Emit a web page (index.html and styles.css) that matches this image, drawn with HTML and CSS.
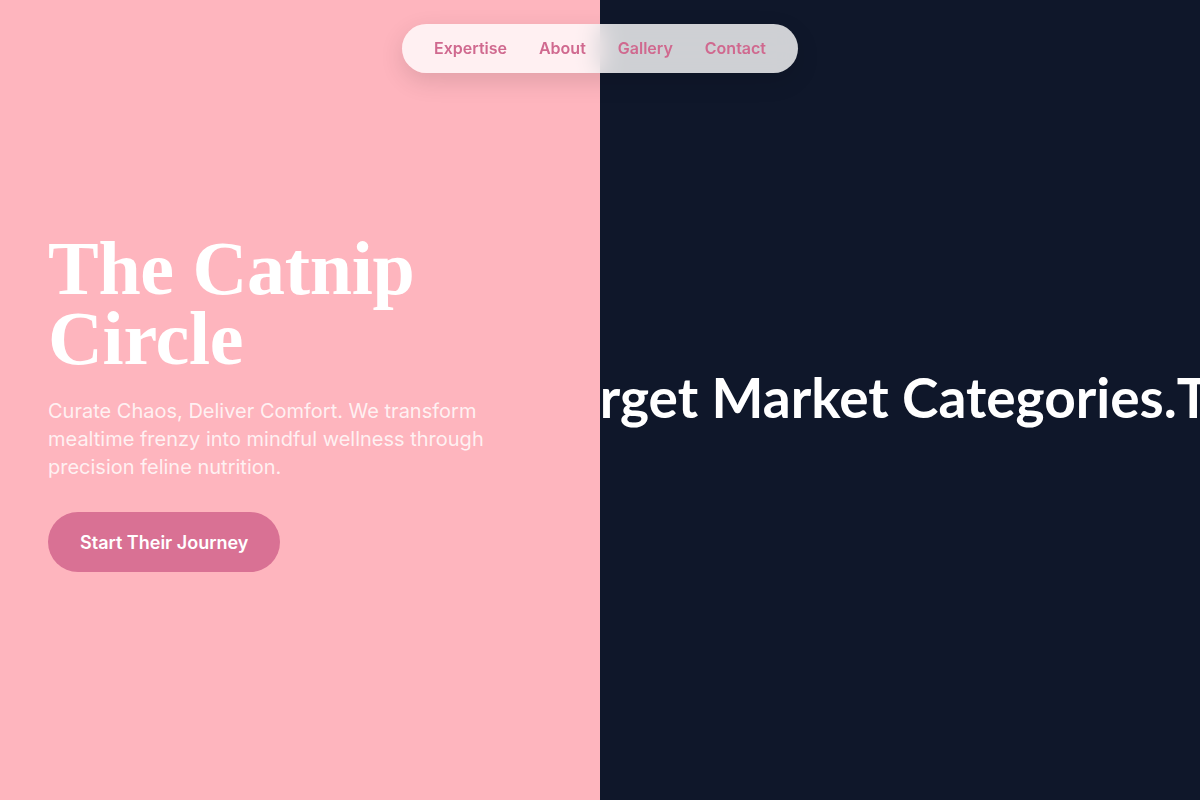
FILE: index.html
```html
<!DOCTYPE html>
<html lang="en">
<head>
<meta charset="utf-8">
<title>The Catnip Circle</title>
<link rel="stylesheet" href="styles.css">
</head>
<body>
<nav class="nav">
  <a class="nav-link" href="#">Expertise</a>
  <a class="nav-link" href="#">About</a>
  <a class="nav-link" href="#">Gallery</a>
  <a class="nav-link" href="#">Contact</a>
</nav>
<main class="split">
  <section class="panel panel-left">
    <div class="hero">
      <h1 class="hero-title">The Catnip<br>Circle</h1>
      <p class="hero-text">Curate Chaos, Deliver Comfort. We transform mealtime frenzy into mindful wellness through precision feline nutrition.</p>
      <a class="hero-btn" href="#">Start Their Journey</a>
    </div>
  </section>
  <section class="panel panel-right">
    <div class="marquee">
      <span class="marquee-item">Target Market Categories.</span><span class="marquee-item">Target Market Categories.</span>
    </div>
  </section>
</main>
</body>
</html>
```

FILE: styles.css
```css
* { box-sizing: border-box; }
html, body { margin: 0; padding: 0; }
body {
  width: 1200px;
  height: 800px;
  overflow: hidden;
  font-family: "Inter", "Liberation Sans", sans-serif;
}
.split {
  display: grid;
  grid-template-columns: 600px 600px;
  height: 800px;
}
.panel {
  display: flex;
  align-items: center;
  overflow: hidden;
}
.panel-left {
  background: #feb5be;
  padding: 0 48px;
}
.panel-right {
  background: #0f172a;
  justify-content: flex-start;
}
.hero { padding-top: 5px; }
.hero-title {
  margin: 0;
  font-family: "Liberation Serif", "DejaVu Serif", serif;
  font-weight: 700;
  font-size: 76px;
  line-height: 70px;
  letter-spacing: -0.3px;
  color: #ffffff;
}
.hero-text {
  margin: 24px 0 0;
  max-width: 480px;
  font-size: 20px;
  line-height: 28px;
  color: rgba(255, 255, 255, 0.82);
}
.hero-btn {
  display: inline-flex;
  align-items: center;
  height: 60px;
  margin-top: 31px;
  padding: 0 32px;
  border-radius: 30px;
  background: #d97194;
  color: #ffffff;
  font-size: 18px;
  font-weight: 600;
  text-decoration: none;
}
.marquee {
  display: flex;
  white-space: nowrap;
  flex-shrink: 0;
  margin-left: -55px;
  margin-bottom: 6px;
}
.marquee-item {
  font-family: "Lato", "Liberation Sans", sans-serif;
  font-weight: 700;
  font-size: 55px;
  line-height: 1;
  color: #ffffff;
}
.nav {
  position: fixed;
  top: 24px;
  left: 402px;
  display: flex;
  gap: 32px;
  padding: 14px 32px;
  border-radius: 999px;
  background: rgba(255, 255, 255, 0.8);
  backdrop-filter: blur(12px);
  box-shadow: 0 8px 24px rgba(0, 0, 0, 0.12);
  z-index: 10;
}
.nav-link {
  font-size: 16px;
  line-height: 21px;
  font-weight: 600;
  color: #d0698f;
  text-decoration: none;
}
```
